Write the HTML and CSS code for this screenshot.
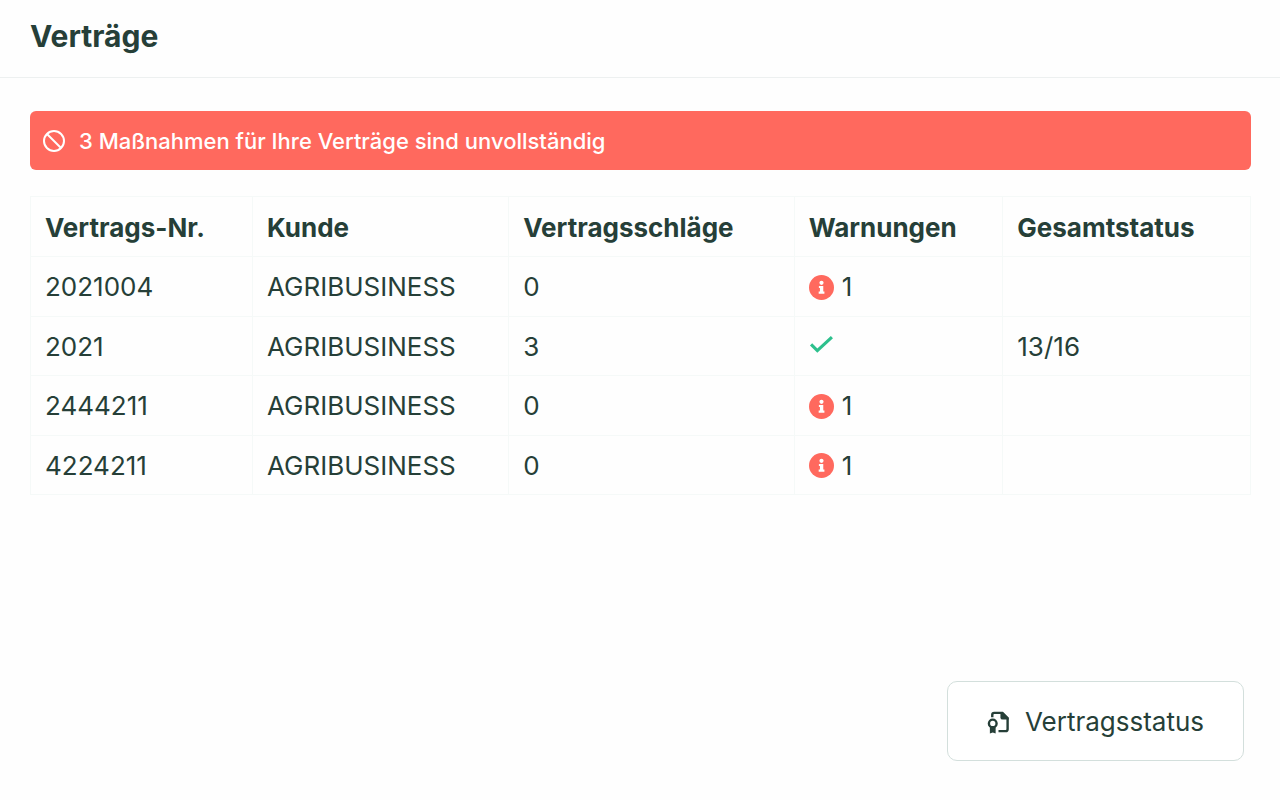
FILE: index.html
```html
<!DOCTYPE html>
<html lang="de">
<head>
  <meta charset="UTF-8">
  <meta name="viewport" content="width=device-width, initial-scale=1.0">
  <title>Verträge</title>
  <link rel="stylesheet" href="styles.css">
</head>
<body>
  <header class="page-header">
    <h1>Verträge</h1>
  </header>

  <main class="content">
    <div class="alert" role="alert">
      <svg class="alert-icon" viewBox="0 0 22 22" aria-hidden="true">
        <circle cx="11" cy="11" r="10"/>
        <path d="M4 4l14 14"/>
      </svg>
      <span>3 Maßnahmen für Ihre Verträge sind unvollständig</span>
    </div>

    <table class="contracts">
      <colgroup>
        <col class="col-number">
        <col class="col-customer">
        <col class="col-fields">
        <col class="col-warnings">
        <col class="col-status">
      </colgroup>
      <thead>
        <tr>
          <th scope="col">Vertrags-Nr.</th>
          <th scope="col">Kunde</th>
          <th scope="col">Vertragsschläge</th>
          <th scope="col">Warnungen</th>
          <th scope="col">Gesamtstatus</th>
        </tr>
      </thead>
      <tbody>
        <tr>
          <td>2021004</td>
          <td>AGRIBUSINESS</td>
          <td>0</td>
          <td><span class="warning"><svg class="info-icon" viewBox="0 0 24 24" aria-hidden="true"><use href="#info"/></svg>1</span></td>
          <td></td>
        </tr>
        <tr>
          <td>2021</td>
          <td>AGRIBUSINESS</td>
          <td>3</td>
          <td><svg class="check-icon" viewBox="0 0 24 24" role="img" aria-label="OK"><path d="M2 10l6 6L22 3"/></svg></td>
          <td>13/16</td>
        </tr>
        <tr>
          <td>2444211</td>
          <td>AGRIBUSINESS</td>
          <td>0</td>
          <td><span class="warning"><svg class="info-icon" viewBox="0 0 24 24" aria-hidden="true"><use href="#info"/></svg>1</span></td>
          <td></td>
        </tr>
        <tr>
          <td>4224211</td>
          <td>AGRIBUSINESS</td>
          <td>0</td>
          <td><span class="warning"><svg class="info-icon" viewBox="0 0 24 24" aria-hidden="true"><use href="#info"/></svg>1</span></td>
          <td></td>
        </tr>
      </tbody>
    </table>
  </main>

  <footer class="page-footer">
    <button type="button" class="button">
      <svg class="button-icon" viewBox="0 0 24 24" aria-hidden="true">
        <path class="sheet" d="M5.500 7V4.500Q5.500 2.500 7.500 2.500H16L21.500 8V19.500Q21.500 21.500 19.500 21.500H12"/>
        <path class="fold" d="M14 1.500H16.500L22.500 7.500V9.500H16.500Q14 9.500 14 7.500Z"/>
        <circle class="seal" cx="6" cy="13.500" r="4"/>
        <path class="fold" d="M3 16.500H9V24L6 23L3 24Z"/>
      </svg>
      <span>Vertragsstatus</span>
    </button>
  </footer>

  <svg class="symbols" aria-hidden="true">
    <symbol id="info" viewBox="0 0 24 24">
      <circle cx="12" cy="12" r="12" fill="#ff695e"/>
      <circle cx="12" cy="7.500" r="2" fill="#fff"/>
      <path d="M9.500 10.500H13.700V15.800H14.800V18H9.300V15.800H10.500V12.500H9.500Z" fill="#fff"/>
    </symbol>
  </svg>
</body>
</html>
```

FILE: styles.css
```css
* {
  box-sizing: border-box;
  margin: 0;
  padding: 0;
}

body {
  font-family: Inter, "Liberation Sans", sans-serif;
  font-size: 26px;
  line-height: 32px;
  background: #fefefe;
  color: #263f38;
  min-height: 100vh;
  display: flex;
  flex-direction: column;
}

.page-header {
  padding: 20px 30px 25px;
  border-bottom: 1px solid #edf0f0;
}

h1 {
  font-size: 30px;
  line-height: 32px;
  font-weight: 700;
}

.content {
  flex: 1;
  padding: 33px 29px 0 30px;
}

.alert {
  display: flex;
  align-items: center;
  gap: 14px;
  padding: 14px 13px 13px;
  margin-bottom: 26px;
  border-radius: 6px;
  background: #ff695e;
  color: #fff;
  font-size: 22px;
  font-weight: 500;
}

.alert-icon {
  width: 22px;
  height: 22px;
  fill: none;
  stroke: currentColor;
  stroke-width: 2;
}

.contracts {
  width: 100%;
  height: 299px;
  table-layout: fixed;
  border-collapse: collapse;
}

.contracts thead tr {
  height: 60px;
}

.contracts th,
.contracts td {
  padding: 13px 14px 11px;
  border: 1px solid #f5f9f8;
  text-align: left;
  vertical-align: middle;
}

.contracts th {
  font-weight: 700;
}

.col-number {
  width: 18.2%;
}

.col-customer {
  width: 21%;
}

.col-fields {
  width: 23.4%;
}

.col-warnings {
  width: 17.1%;
}

.col-status {
  width: 20.3%;
}

.warning {
  display: flex;
  align-items: center;
  gap: 8px;
}

.info-icon,
.check-icon {
  display: block;
  width: 25px;
  height: 25px;
}

.check-icon {
  fill: none;
  stroke: #2dc08d;
  stroke-width: 3;
}

.page-footer {
  display: flex;
  justify-content: flex-end;
  padding: 0 36px 39px;
}

.button {
  display: flex;
  align-items: center;
  gap: 15px;
  padding: 24px 39px 22px;
  border: 1px solid #d3dfdc;
  border-radius: 10px;
  background: #fff;
  color: inherit;
  font: inherit;
  cursor: pointer;
}

.button-icon {
  width: 23px;
  height: 24px;
}

.sheet,
.seal {
  fill: none;
  stroke: currentColor;
  stroke-width: 2.5;
}

.fold {
  fill: currentColor;
}

.symbols {
  position: absolute;
  width: 0;
  height: 0;
}
```
